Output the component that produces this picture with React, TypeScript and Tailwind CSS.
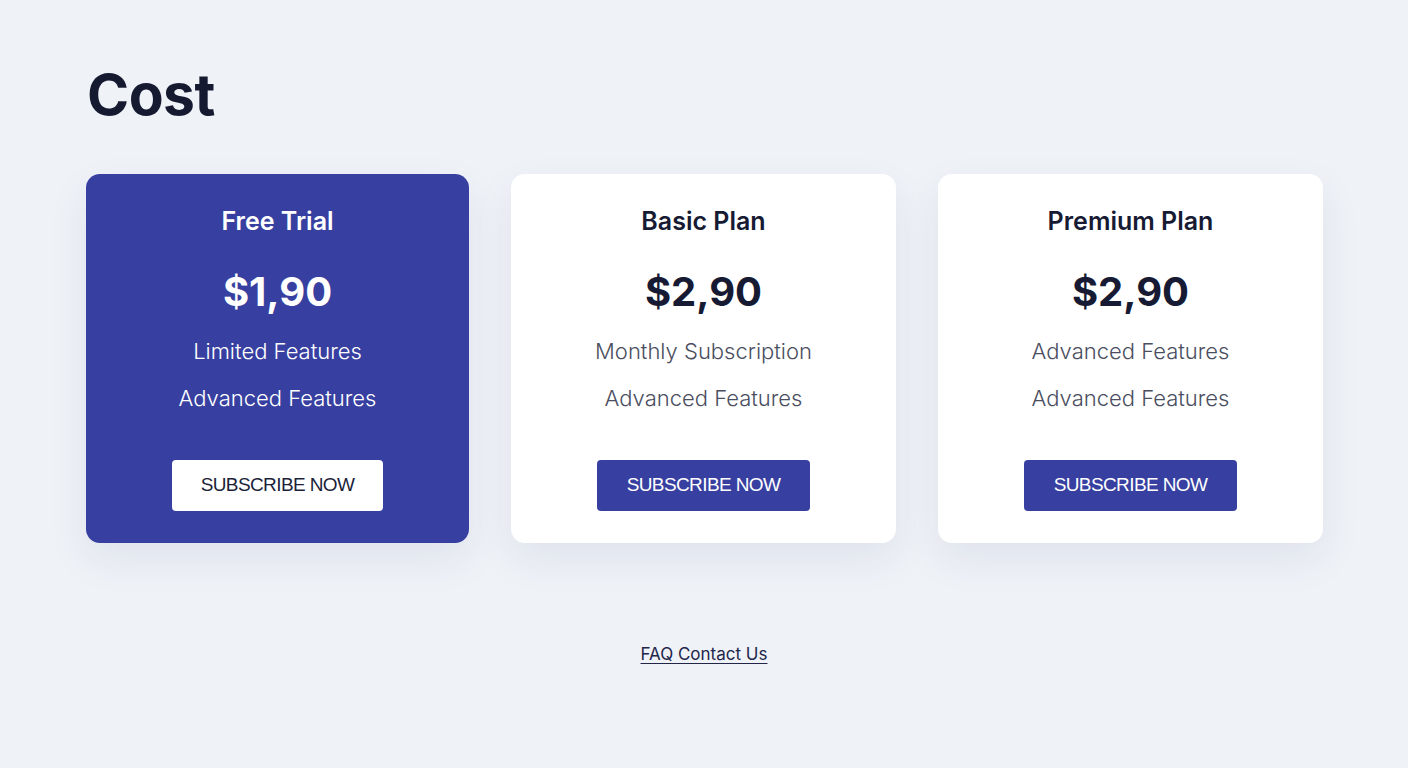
const plans = [
  {
    name: "Free Trial",
    price: "$1,90",
    features: ["Limited Features", "Advanced Features"],
    featured: true,
    width: "w-[383px]",
  },
  {
    name: "Basic Plan",
    price: "$2,90",
    features: ["Monthly Subscription", "Advanced Features"],
    featured: false,
    width: "w-[385px]",
  },
  {
    name: "Premium Plan",
    price: "$2,90",
    features: ["Advanced Features", "Advanced Features"],
    featured: false,
    width: "w-[385px]",
  },
];

export default function App() {
  return (
    <div className="min-h-screen w-full bg-[#eff2f7] font-['Inter',sans-serif] text-[#171a33]">
      <div className="pl-[86px] pt-[60px]">
        <h1 className="pl-[1px] text-[57px] leading-[70px] font-bold tracking-[-0.5px] text-[#161a31]">
          Cost
        </h1>

        {/* Pricing cards */}
        <div className="mt-[44px] flex gap-[42px]">
          {plans.map((plan) => (
            <div
              key={plan.name}
              className={`${plan.width} flex h-[369px] flex-col items-center rounded-[14px] pt-[31px] shadow-[0_16px_40px_rgba(40,50,100,0.08)] ${
                plan.featured ? "bg-[#373fa0] text-white" : "bg-white text-[#171a33]"
              }`}
            >
              <h2 className="text-[25px] leading-[32px] font-semibold">
                {plan.name}
              </h2>
              <p className="mt-[29px] text-[40px] leading-[52px] font-bold">
                {plan.price}
              </p>
              <p
                className={`mt-[18px] text-[22px] leading-[30px] font-light ${
                  plan.featured ? "text-white" : "text-[#4a4e60]"
                }`}
              >
                {plan.features[0]}
              </p>
              <p
                className={`mt-[17px] text-[22px] leading-[30px] font-light ${
                  plan.featured ? "text-white" : "text-[#4a4e60]"
                }`}
              >
                {plan.features[1]}
              </p>
              <button
                className={`mt-[47px] h-[51px] rounded-[4px] font-['Liberation_Sans',Arial,sans-serif] text-[19px] tracking-[-0.6px] ${
                  plan.featured
                    ? "w-[211px] bg-white text-[#1c1f3a]"
                    : "w-[213px] bg-[#373fa0] text-white"
                }`}
              >
                SUBSCRIBE NOW
              </button>
            </div>
          ))}
        </div>
      </div>

      <div className="mt-[99px] flex justify-center">
        <a
          href="#"
          className="text-[17px] leading-[24px] text-[#22264a] underline underline-offset-[3px]"
        >
          FAQ Contact Us
        </a>
      </div>
    </div>
  );
}
